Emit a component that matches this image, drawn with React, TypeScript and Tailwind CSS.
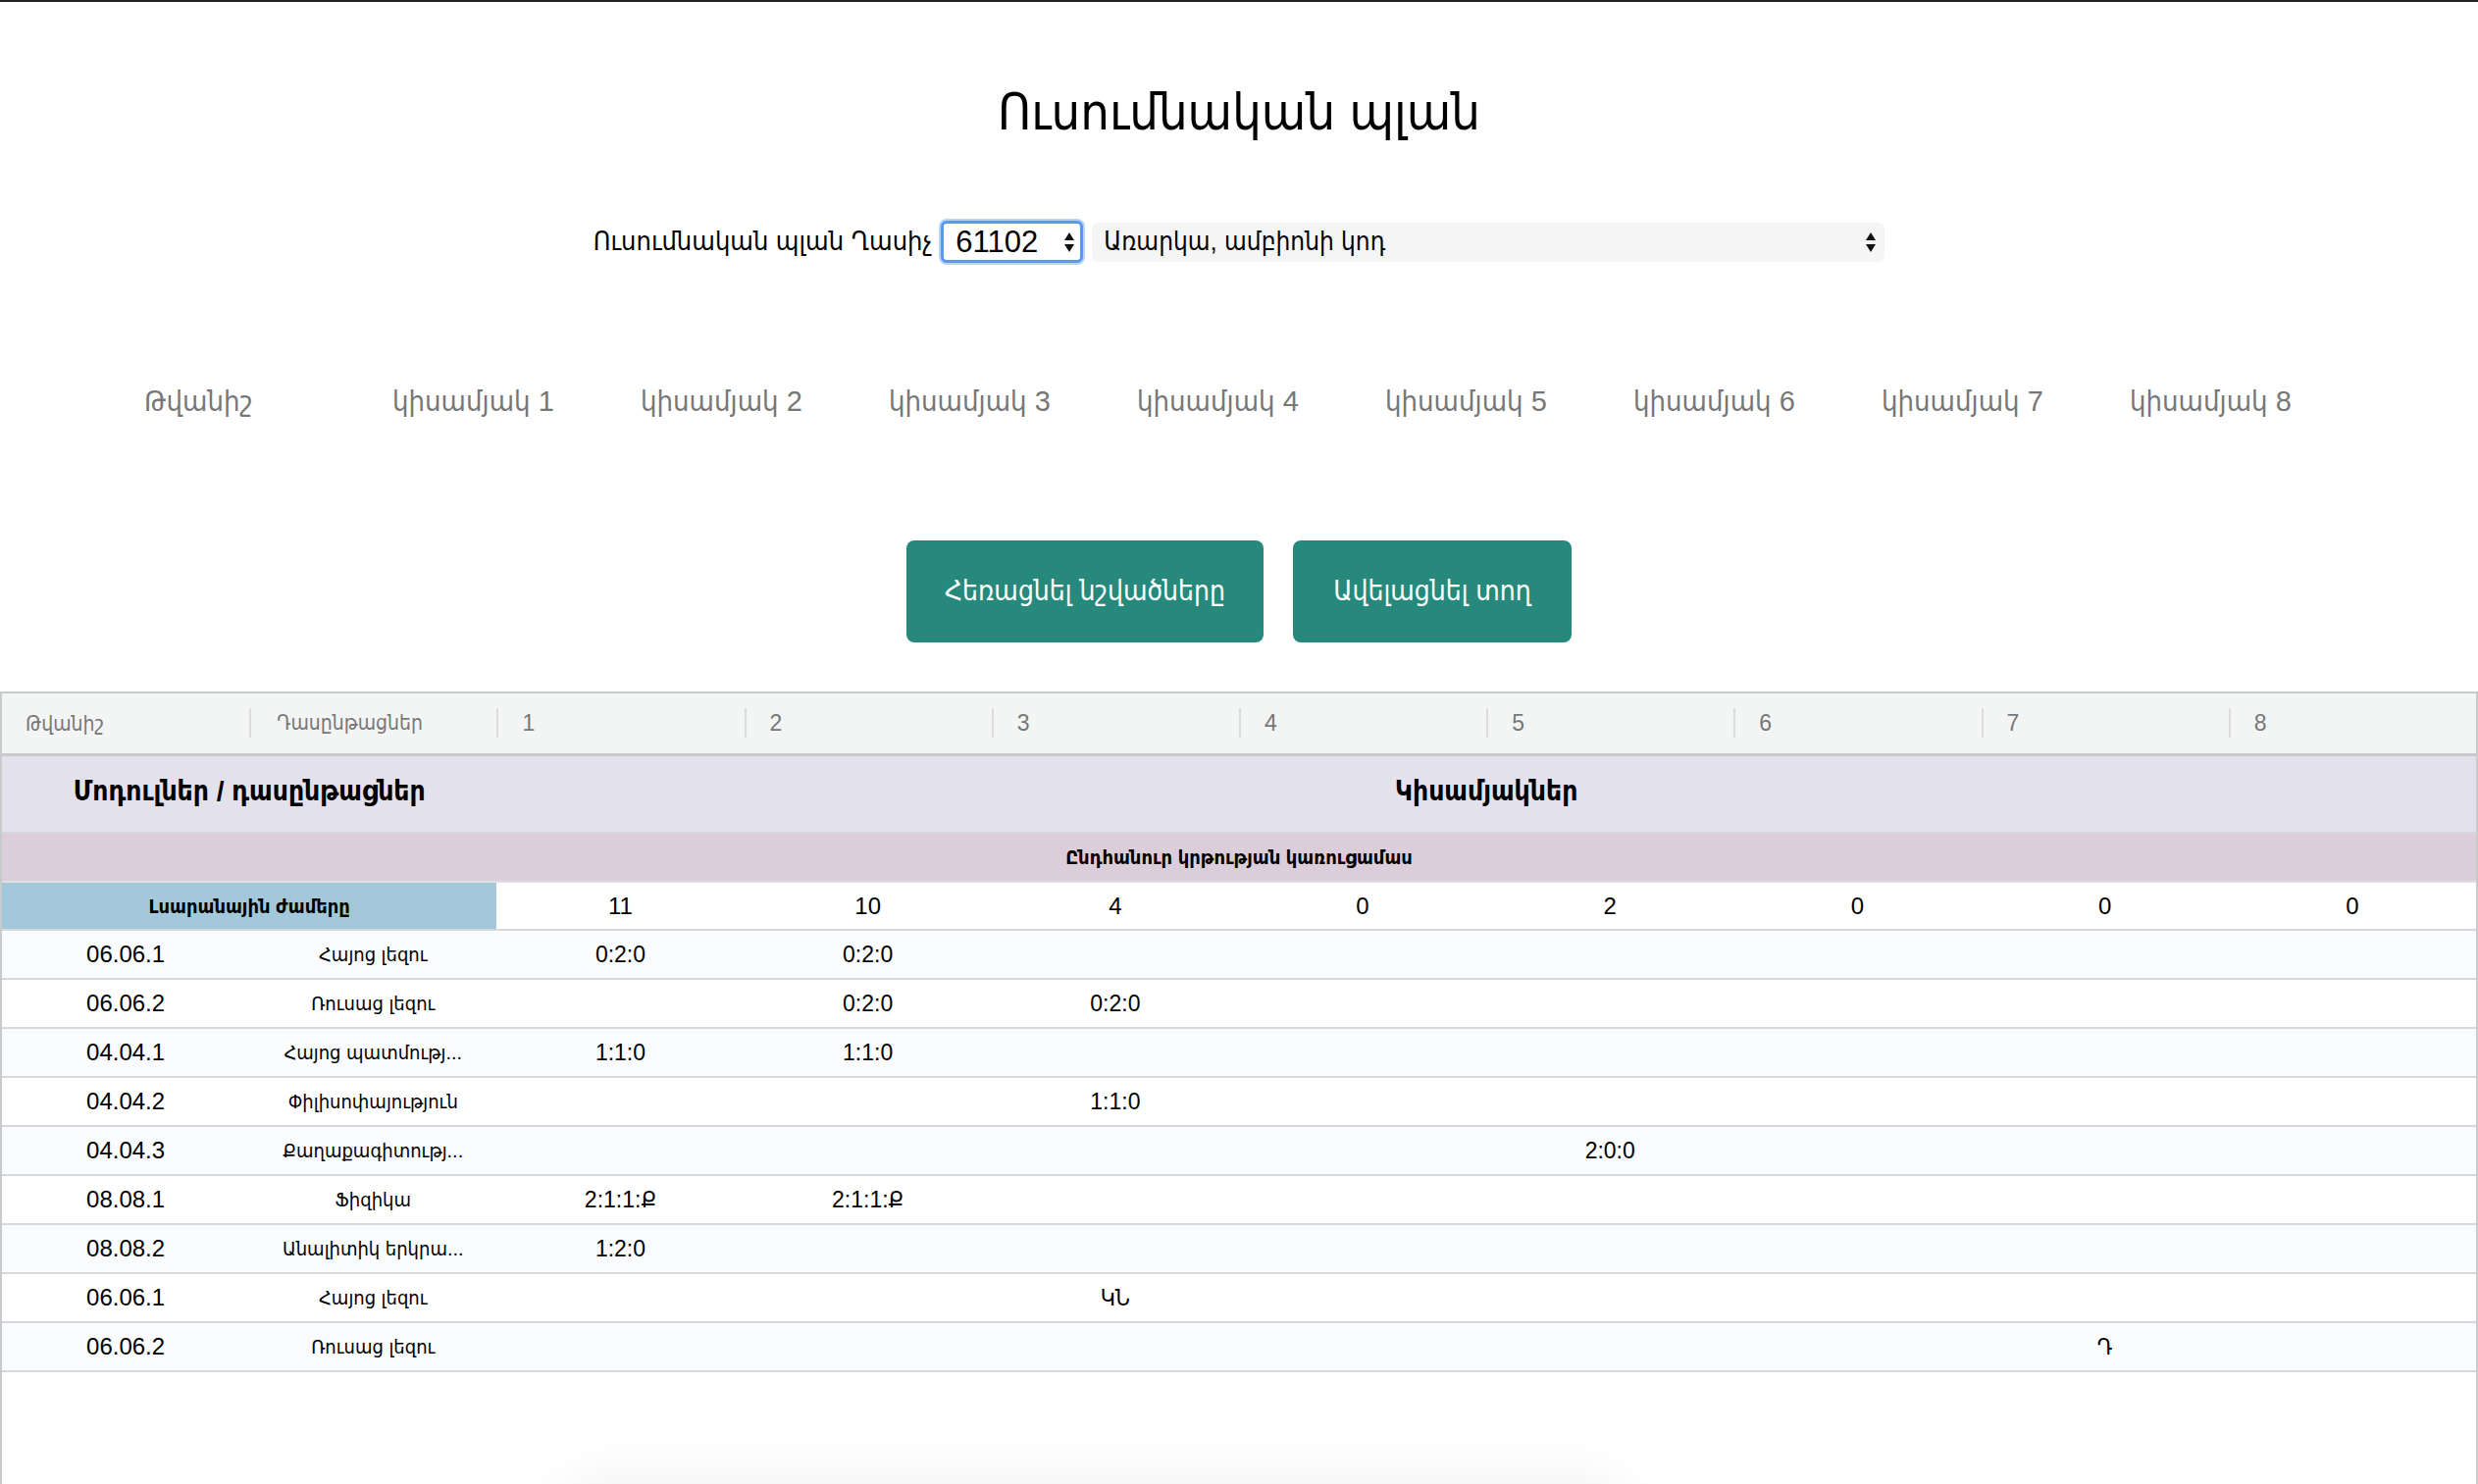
const tabs = ["Թվանիշ", "կիսամյակ 1", "կիսամյակ 2", "կիսամյակ 3", "կիսամյակ 4", "կիսամյակ 5", "կիսամյակ 6", "կիսամյակ 7", "կիսամյակ 8"];

const hours = ["11", "10", "4", "0", "2", "0", "0", "0"];

const rows: { code: string; name: string; cells: Record<number, string> }[] = [
	{ code: "06.06.1", name: "Հայոց լեզու", cells: { 0: "0:2:0", 1: "0:2:0" } },
	{ code: "06.06.2", name: "Ռուսաց լեզու", cells: { 1: "0:2:0", 2: "0:2:0" } },
	{ code: "04.04.1", name: "Հայոց պատմությ...", cells: { 0: "1:1:0", 1: "1:1:0" } },
	{ code: "04.04.2", name: "Փիլիսոփայություն", cells: { 2: "1:1:0" } },
	{ code: "04.04.3", name: "Քաղաքագիտությ...", cells: { 4: "2:0:0" } },
	{ code: "08.08.1", name: "Ֆիզիկա", cells: { 0: "2:1:1:Ք", 1: "2:1:1:Ք" } },
	{ code: "08.08.2", name: "Անալիտիկ երկրա...", cells: { 0: "1:2:0" } },
	{ code: "06.06.1", name: "Հայոց լեզու", cells: { 2: "ԿՆ" } },
	{ code: "06.06.2", name: "Ռուսաց լեզու", cells: { 6: "Դ" } },
];

const font = "font-['Liberation_Sans','DejaVu_Sans_Condensed',sans-serif]";

// native select up/down arrows
function SelectArrows() {
	return (
		<svg width="12" height="24" viewBox="0 0 12 24" className="shrink-0">
			<polygon points="1,10 6,2 11,10" fill="#111" />
			<polygon points="1,14 6,22 11,14" fill="#111" />
		</svg>
	);
}

export default function App() {
	return (
		<div className={`relative h-[1513px] overflow-hidden bg-white border-t-2 border-[#222] ${font}`}>
			{/* Title */}
			<h1 className="pt-[80px] text-center text-[52px] leading-[64px] text-black">Ուսումնական պլան</h1>

			{/* Plan selector */}
			<div className="mt-[79px] flex items-center justify-center gap-[9px]">
				<span className="text-[27px] text-black">Ուսումնական պլան Ղասիչ</span>
				<div className="flex h-[43px] w-[145px] items-center justify-between rounded-[6px] border-[3px] border-[#5a97ee] bg-white pl-[12px] pr-[5px] shadow-[0_0_0_2px_#b9d3f7]">
					<span className="text-[31px] leading-none text-black">61102</span>
					<SelectArrows />
				</div>
				<div className="flex h-[40px] w-[808px] items-center justify-between rounded-[6px] bg-[#f5f5f5] pl-[12px] pr-[8px]">
					<span className="text-[26px] text-black">Առարկա, ամբիոնի կոդ</span>
					<SelectArrows />
				</div>
			</div>

			{/* Semester tabs */}
			<div className="mt-[123px] flex pl-[147px]">
				{tabs.map((t, i) => (
					<div key={i} className="w-[253px] text-[29px] leading-[36px] text-[#777]">
						{t}
					</div>
				))}
			</div>

			{/* Actions */}
			<div className="mt-[124px] flex justify-center gap-[30px]">
				<button className="h-[104px] w-[364px] rounded-[8px] bg-[#26897c] text-[28px] text-white">Հեռացնել նշվածները</button>
				<button className="h-[104px] w-[284px] rounded-[8px] bg-[#26897c] text-[28px] text-white">Ավելացնել տող</button>
			</div>

			{/* Plan table */}
			<div className="mt-[50px] h-[820px] border-x-2 border-t-2 border-[#c8cacc]">
				<table className="w-full table-fixed border-collapse">
					<thead>
						<tr className="h-[62px] border-b-[3px] border-[#c7c9cc] bg-[#f3f4f4]">
							<th className="px-[24px] text-left text-[21px] font-normal text-[#777]">Թվանիշ</th>
							{["Դասընթացներ", "1", "2", "3", "4", "5", "6", "7", "8"].map((h, i) => (
								<th key={i} className="text-left font-normal text-[#777]">
									<span className={`block border-l-2 border-[#dcdcdc] ${i === 0 ? "pl-[26px] text-[21px]" : "pl-[24px] text-[23px]"} leading-[30px]`}>
										{h}
									</span>
								</th>
							))}
						</tr>
					</thead>
					<tbody>
						<tr className="h-[80px] border-b-2 border-[#d6d6dc] bg-[#e3e1ec]">
							<td colSpan={2} className="text-center align-top pt-[15px] text-[28px] font-bold text-black">
								Մոդուլներ / դասընթացներ
							</td>
							<td colSpan={8} className="text-center align-top pt-[15px] text-[28px] font-bold text-black">
								Կիսամյակներ
							</td>
						</tr>
						<tr className="h-[50px] border-b-2 border-[#e2dde4] bg-[#dccdda]">
							<td colSpan={10} className="text-center text-[20px] font-bold text-black">
								Ընդհանուր կրթության կառուցամաս
							</td>
						</tr>
						<tr className="h-[49px] border-b-2 border-[#d6d8db]">
							<td colSpan={2} className="bg-[#a3c8d9] text-center text-[20px] font-bold text-black">
								Լսարանային ժամերը
							</td>
							{hours.map((h, i) => (
								<td key={i} className="text-center text-[24px] text-black">
									{h}
								</td>
							))}
						</tr>
						{rows.map((r, ri) => (
							<tr key={ri} className={`h-[50px] border-b-2 border-[#d6d8db] ${ri % 2 === 0 ? "bg-[#f9fbfd]" : "bg-white"}`}>
								<td className="text-center text-[24px] text-black">{r.code}</td>
								<td className="text-center text-[20px] text-black">{r.name}</td>
								{Array.from({ length: 8 }).map((_, ci) => (
									<td key={ci} className="text-center text-[23px] text-black">
										{r.cells[ci] ?? ""}
									</td>
								))}
							</tr>
						))}
					</tbody>
				</table>
			</div>

			{/* Floating panel peeking from below */}
			<div className="absolute left-[600px] top-[1545px] h-[200px] w-[1030px] rounded-2xl bg-white shadow-[0_0_70px_25px_rgba(0,0,0,0.09)]" />
		</div>
	);
}
